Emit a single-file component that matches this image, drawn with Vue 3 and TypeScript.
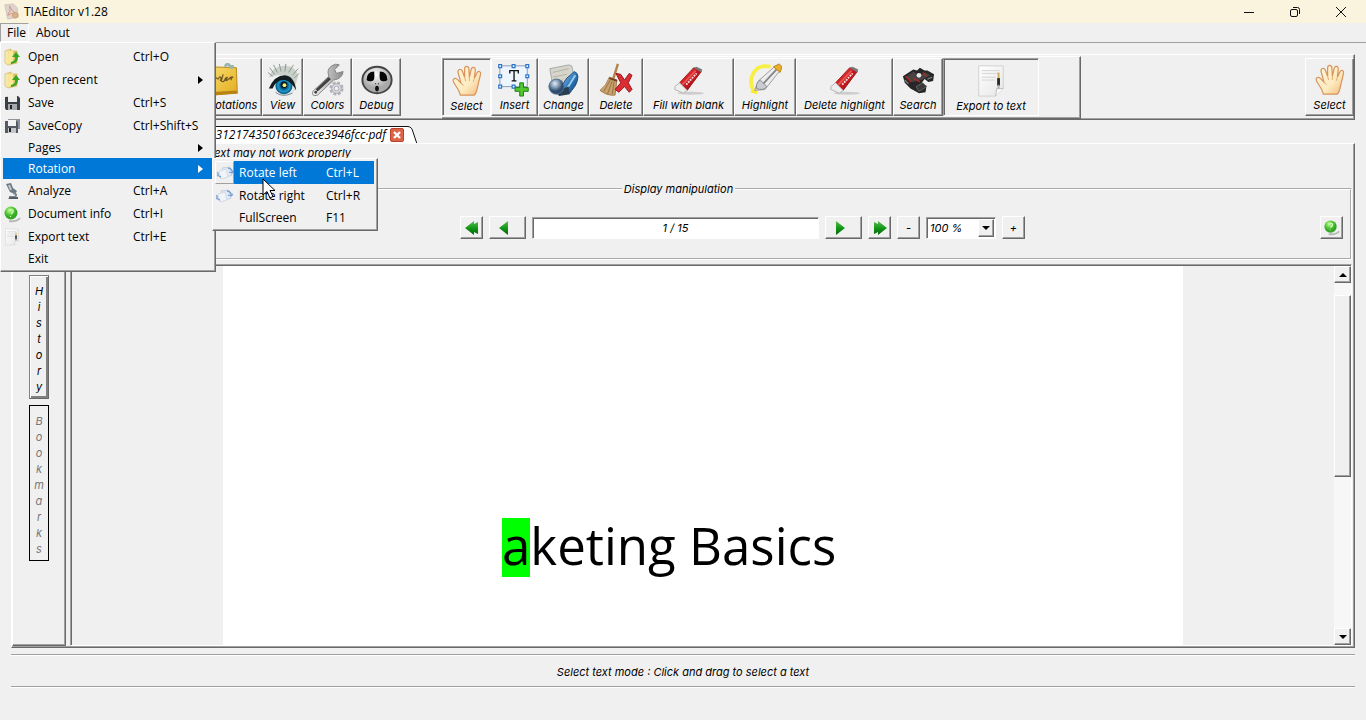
<script setup lang="ts">
import { ref } from 'vue'

interface Tool { label: string; icon: string; pressed?: boolean }
interface Item { label: string; keys?: string; icon?: string; sub?: boolean; active?: boolean }

const viewTools: Tool[] = [
  { label: 'Annotations', icon: 'notes' },
  { label: 'View', icon: 'eye' },
  { label: 'Colors', icon: 'wrench' },
  { label: 'Debug', icon: 'ghost' },
]
const editTools: Tool[] = [
  { label: 'Select', icon: 'hand', pressed: true },
  { label: 'Insert', icon: 'insert' },
  { label: 'Change', icon: 'change' },
  { label: 'Delete', icon: 'broom' },
  { label: 'Fill with blank', icon: 'eraser' },
  { label: 'Highlight', icon: 'marker' },
  { label: 'Delete highlight', icon: 'eraser' },
  { label: 'Search', icon: 'binoculars' },
  { label: 'Export to text', icon: 'page', pressed: true },
]
const fileMenu: Item[] = [
  { label: 'Open', keys: 'Ctrl+O', icon: 'folder' },
  { label: 'Open recent', icon: 'folder', sub: true },
  { label: 'Save', keys: 'Ctrl+S', icon: 'disk' },
  { label: 'SaveCopy', keys: 'Ctrl+Shift+S', icon: 'disks' },
  { label: 'Pages', sub: true },
  { label: 'Rotation', sub: true, active: true },
  { label: 'Analyze', keys: 'Ctrl+A', icon: 'scope' },
  { label: 'Document info', keys: 'Ctrl+I', icon: 'info' },
  { label: 'Export text', keys: 'Ctrl+E', icon: 'page' },
  { label: 'Exit' },
]
const rotationMenu: Item[] = [
  { label: 'Rotate left', keys: 'Ctrl+L', icon: 'rotate', active: true },
  { label: 'Rotate right', keys: 'Ctrl+R', icon: 'rotate' },
  { label: 'FullScreen', keys: 'F11' },
]
const pageText = ref('1 / 15')
const zoom = ref('100 %')
</script>

<template>
  <div class="app">
    <svg class="defs" width="0" height="0" aria-hidden="true">
      <defs>
        <linearGradient id="gSkin" x1="0" y1="0" x2="1" y2="1"><stop offset="0" stop-color="#fff6dc" /><stop offset=".6" stop-color="#fdebc0" /><stop offset="1" stop-color="#efb878" /></linearGradient>
        <linearGradient id="gNote" x1="0" y1="0" x2="1" y2="1"><stop offset="0" stop-color="#f8dd70" /><stop offset="1" stop-color="#e2ac1c" /></linearGradient>
        <radialGradient id="gIris"><stop offset="0" stop-color="#03202e" /><stop offset=".35" stop-color="#0b4a6c" /><stop offset=".7" stop-color="#1b9bd2" /><stop offset="1" stop-color="#06466a" /></radialGradient>
        <linearGradient id="gSteel" x1="0" y1="0" x2="1" y2="0"><stop offset="0" stop-color="#f7f7f7" /><stop offset="1" stop-color="#8b8b8b" /></linearGradient>
        <radialGradient id="gFace" cx=".45" cy=".3"><stop offset="0" stop-color="#ffffff" /><stop offset="1" stop-color="#a9a9a9" /></radialGradient>
        <linearGradient id="gBlue" x1="0" y1="0" x2="1" y2="1"><stop offset="0" stop-color="#9cc6ea" /><stop offset=".5" stop-color="#2b78bd" /><stop offset="1" stop-color="#123c70" /></linearGradient>
        <radialGradient id="gBall" cx=".4" cy=".3"><stop offset="0" stop-color="#e4edf5" /><stop offset=".6" stop-color="#7892ac" /><stop offset="1" stop-color="#2e4c6c" /></radialGradient>
        <linearGradient id="gRed" x1="0" y1="0" x2="1" y2="1"><stop offset="0" stop-color="#f0645c" /><stop offset=".45" stop-color="#cf1820" /><stop offset="1" stop-color="#8f0d12" /></linearGradient>
        <radialGradient id="gGreen" cx=".4" cy=".3"><stop offset="0" stop-color="#d4ffb0" /><stop offset=".5" stop-color="#69d545" /><stop offset="1" stop-color="#36a826" /></radialGradient>
        <linearGradient id="gArrow" x1="0" y1="0" x2="0" y2="1"><stop offset="0" stop-color="#60b850" /><stop offset=".5" stop-color="#119a18" /><stop offset="1" stop-color="#045f0a" /></linearGradient>
        <linearGradient id="gFolder" x1="0" y1="0" x2="1" y2="0"><stop offset="0" stop-color="#fdf3b4" /><stop offset="1" stop-color="#d8b85a" /></linearGradient>
        <linearGradient id="gPaper" x1="0" y1="0" x2="1" y2="1"><stop offset="0" stop-color="#ffffff" /><stop offset="1" stop-color="#e6e6e6" /></linearGradient>
      </defs>
      <symbol id="hand" viewBox="0 0 36 36">
        <path d="M11 33C10 27 6 24 3.500 18.500 2.500 16 5 14 7.500 16L11.500 20 8.500 9C8 5.500 11.500 4.500 13 7.500L15.500 14 15.500 5C15.500 1.800 19.500 1.800 20 5L20.500 14 22.500 5.500C23.500 2.500 27 3.200 26.800 6.500L25.800 15 28.500 9.500C30 6.500 33 8 32.300 11L29 25Q28 31 25.500 33Z" fill="url(#gSkin)" stroke="#d9935c" stroke-width="1.300" />
        <path d="M15.500 14l1 4M20.500 14v4M25.800 15l-1.300 4M11.500 20l3 3" fill="none" stroke="#e2a86f" />
      </symbol>
      <symbol id="notes" viewBox="0 0 36 36">
        <path d="M0 4L29 5 30 32 0 34Z" fill="url(#gNote)" stroke="#b98613" />
        <path d="M0 31l29-2 1 3-30 3z" fill="#b88310" />
        <path d="M5 20q1-6 3-4t3-1q3-1 1 4m3-7l-2 7q3 2 4-2 3-3 2-1-3 5 2 1 3-3 4-2-3 2-1 3" fill="none" stroke="#6b5520" stroke-width="1.300" />
        <path d="M17 4q2-5 5-1t3-1" fill="none" stroke="#9ab4ae" stroke-width="3" />
      </symbol>
      <symbol id="eye" viewBox="0 0 36 36">
        <path d="M3 15Q8 2 21 3 32 4 34 14L31 24Q22 9 8 14Z" fill="#bdc7bd" opacity=".75" />
        <path d="M7 14L2 10M9 12L4 5M12 10L8 2M16 9L14 1M20 9L21 1M24 10L29 2M28 13L34 6M30 16L35 11" stroke="#87938e" />
        <path d="M5 28Q8 16 19 14 29 14 32 28 26 35 18 34 10 33 8 25Z" fill="#dce5e8" />
        <circle cx="19" cy="24" r="9" fill="url(#gIris)" />
        <circle cx="19" cy="23" r="3.500" fill="#031b27" /><circle cx="19.500" cy="23.500" r="2" fill="#fff46e" />
        <path d="M3 27Q9 13 20 13 30 14 32 29 27 20 20 18 11 17 7 27" fill="#121d22" />
        <path d="M10 31Q17 37 28 32" fill="none" stroke="#77898b" />
      </symbol>
      <symbol id="wrench" viewBox="0 0 36 36">
        <path d="M2 30L19 14Q16 7 22 3 26 0 30 2L25 7 27 11 34 9Q33 17 24 18L7 34Q0 36 2 30Z" fill="url(#gSteel)" stroke="#818181" />
        <path d="M6 29L20 16" stroke="#424242" stroke-width="3" /><circle cx="5" cy="31" r="1.500" fill="#444" />
        <circle cx="27" cy="27" r="6" fill="#e9e9ee" stroke="#b2b2ba" stroke-width="3" stroke-dasharray="3 1.700" />
        <circle cx="27" cy="27" r="5" fill="#dedee4" stroke="#a6a6b0" /><circle cx="27" cy="27" r="2.500" fill="#f0f0f0" stroke="#a6a6b0" />
      </symbol>
      <symbol id="ghost" viewBox="0 0 36 36">
        <ellipse cx="18" cy="18" rx="15.500" ry="14" fill="url(#gFace)" stroke="#444" stroke-width="2" />
        <path d="M15 9Q7 9 7 18 9 20 13 19 16 19 15 9ZM21 9Q29 9 29 18 27 20 23 19 20 19 21 9Z" fill="#050505" />
        <ellipse cx="18" cy="27" rx="2" ry="3" fill="#111" /><path d="M16 22h1m2 0h1" stroke="#111" />
      </symbol>
      <symbol id="insert" viewBox="0 0 36 36">
        <path d="M2 3H31V25H2Z" fill="#edf5ff" stroke="#8597b2" />
        <path d="M.8 1.800h3v3h-3zM15 1.800h3v3h-3zM29.500 1.800h3v3h-3zM.8 12.500h3v3h-3zM29.500 12.500h3v3h-3zM.8 23.500h3v3h-3zM15 23.500h3v3h-3z" fill="#fff" stroke="#2b75c9" stroke-width="1.300" />
        <path d="M12.500 11V8H21.500V11M17 8V19M14.500 19H19.500" fill="none" stroke="#111" stroke-width="1.400" />
        <path d="M23 21h4v5h5v4h-5v5h-4v-5h-5v-4h5z" fill="#55c62e" stroke="#177d12" />
      </symbol>
      <symbol id="change" viewBox="0 0 36 36">
        <path d="M3 6L23 2Q27 2 27 6L29 24 7 29Z" fill="#d7d5c9" stroke="#a4a6a7" />
        <path d="M6 10l17-4M6 15l15-3M7 20l10-2" stroke="#aeb0aa" />
        <path d="M20 32Q13 25 21 16L29 9Q36 12 30 24L24 32Z" fill="url(#gBlue)" stroke="#234a76" />
        <path d="M20 29L30 13" stroke="#9fceed" stroke-width="2" />
        <path d="M8 30L23 25 24 33 13 35Z" fill="#283e54" /><circle cx="10" cy="25" r="8" fill="url(#gBall)" stroke="#55718f" />
      </symbol>
      <symbol id="broom" viewBox="0 0 36 36">
        <path d="M20 1L15 17" stroke="#b2824b" stroke-width="2.500" />
        <path d="M11 15L19 18 17 34Q9 35 1 29 8 24 11 15Z" fill="#c9a16d" stroke="#a07a4a" />
        <path d="M12 18L5 30M14 19L9 33M16 20L14 33" stroke="#94703f" /><path d="M11 16l8 3" stroke="#733f25" stroke-width="2" />
        <path d="M18 11L23 12 27 18 32 11 35 13 31 21 35 28 32 31 27 25 21 31 17 28 23 21Z" fill="#d92d32" stroke="#981219" />
      </symbol>
      <symbol id="eraser" viewBox="0 0 36 36">
        <ellipse cx="20" cy="32" rx="14" ry="1.500" fill="#ccc" />
        <path d="M8 21L23 5 31 9 16 29Z" fill="url(#gRed)" stroke="#9d171b" /><path d="M23 5L26 4 32 7 31 10Z" fill="#777" />
        <path d="M11 23L25 8" stroke="#e65852" stroke-width="2" /><path d="M15 23L26 11" stroke="#f5dada" stroke-width="2" stroke-dasharray="2 1" />
        <path d="M8 21L16 29 12 32 3 28 3 25Z" fill="#eee" stroke="#b0b0b0" />
      </symbol>
      <symbol id="marker" viewBox="0 0 36 36">
        <path d="M24 4Q12 1 6 10 0 21 7 31" fill="none" stroke="#f8ef45" stroke-width="4" /><path d="M2 31L9 26 10 33Z" fill="#fbec28" />
        <path d="M7 29L11 19 28 4 33 9 18 28Z" fill="#ededed" stroke="#999" /><path d="M16 22L30 7" stroke="#868686" stroke-width="2" />
        <path d="M9 27Q8 21 13 18L20 25Q16 30 9 27Z" fill="#c9cbd1" stroke="#84868c" />
        <path d="M27 4L33 1 36 4 34 10Z" fill="#eeae22" stroke="#b7811d" />
      </symbol>
      <symbol id="binoculars" viewBox="0 0 36 36">
        <path d="M2 14L13 7 17 8 20 5 25 8 28 8 35 12 34 19 29 20 25 17 22 21 27 24 26 31 19 32 10 27 4 21Z" fill="#272527" />
        <path d="M5 15L13 9 19 13 26 10 31 13 22 18 12 20Z" fill="#484244" /><path d="M16 25L23 21 27 25 19 30Z" fill="#3a3939" stroke="#666" />
        <path d="M5 14l6 6M23 10l4 4M13 16l7 4" stroke="#ad2a22" stroke-width="1.500" /><circle cx="19" cy="13" r="2.500" fill="#e9e9e9" />
        <path d="M28 17l5-2M4 18l4 4" stroke="#777" stroke-width="1.500" />
      </symbol>
      <symbol id="page" viewBox="0 0 36 36">
        <path d="M5 2H31V26L23 34H5Z" fill="url(#gPaper)" stroke="#d0d0d0" /><path d="M31 26H24L23 34" fill="#f8f8f8" stroke="#bbb" />
        <path d="M8 7h19M8 10h18M8 14h15M8 17h14" stroke="#d2d2d2" />
        <path d="M26 9v10" stroke="#cdac5a" stroke-width="2" /><path d="M26 15v8" stroke="#27272b" stroke-width="3" /><path d="M26 22v4" stroke="#aaa" stroke-width="2" />
      </symbol>
      <symbol id="folder" viewBox="0 0 18 18">
        <path d="M2 3L8 1 8 3 14 3 14 15 5 17 2 15Z" fill="url(#gFolder)" stroke="#d1b660" stroke-width=".7" />
        <path d="M6 4L10 2V14L5 16Z" fill="#f9e896" /><path d="M8 14Q13 13 12 9L9 9 13 4 17 9 15 9Q15 15 8 16Z" fill="#39a622" />
      </symbol>
      <symbol id="disk" viewBox="0 0 18 18">
        <path d="M2 3L15 2 17 4V16L3 16 2 14Z" fill="#3a3e45" /><path d="M5 2h9v6H5z" fill="#eee" /><path d="M5 10h9v6H5z" fill="#a5a8ac" /><path d="M7 11h2v4H7z" fill="#222" />
      </symbol>
      <symbol id="disks" viewBox="0 0 18 18">
        <path d="M5 2H17V12H5Z" fill="#8d939d" /><path d="M2 4H14L15 6V16H2Z" fill="#555a64" /><path d="M5 3h8v6H5z" fill="#f3f3f3" /><path d="M5 11h8v5H5z" fill="#c3c7cc" /><path d="M6 11h2v4H6z" fill="#222" />
      </symbol>
      <symbol id="scope" viewBox="0 0 18 18">
        <path d="M3 2L8 1 10 6 14 9 12 12 7 10 5 6Z" fill="#6b7983" /><path d="M6 3L8 8" stroke="#c3cbd0" stroke-width="2" /><path d="M10 11Q15 12 12 15H6" fill="none" stroke="#7c8790" stroke-width="2" /><path d="M5 17H15V15H7Z" fill="#525e68" />
      </symbol>
      <symbol id="info" viewBox="0 0 18 18">
        <path d="M6 16Q14 17 17 13" fill="none" stroke="#b8b8b8" stroke-width="2" /><circle cx="8" cy="8" r="6.500" fill="url(#gGreen)" />
        <path d="M7 5Q11 4 10 7L8 9M7.500 11v1" fill="none" stroke="#d9ffc6" stroke-width="1.200" />
      </symbol>
      <symbol id="rotate" viewBox="0 0 18 18">
        <g opacity=".8"><path d="M6 4L14 3 16 11 8 14Z" fill="#dfe9f6" stroke="#b9c9de" /><path d="M3 7L10 5 12 13 5 15Z" fill="#f0f5fc" stroke="#ccd8e8" />
        <path d="M2 8Q1 12 5 13M3 11l-2 1M12 4Q17 5 16 9M16 9l2-2M16 9l-3-1" fill="none" stroke="#5a8dcc" stroke-width="1.300" /></g>
      </symbol>
      <symbol id="back" viewBox="0 0 14 14"><path d="M2 7L11 0V14Z" fill="url(#gArrow)" /></symbol>
      <symbol id="first" viewBox="0 0 14 14"><path d="M0 7L9 0V3L13 1V13L9 11V14Z" fill="url(#gArrow)" /></symbol>
    </svg>

    <header class="titlebar">
      <svg class="logo" viewBox="0 0 18 18"><path d="M2 2L11 1 15 5 16 15 5 17Z" fill="#ded4cf" stroke="#d0c5bc" /><path d="M5 13Q9 8 7 3 9 9 14 11 9 10 5 13" fill="none" stroke="#dc9188" /><circle cx="13" cy="13" r="3" fill="#dcb188" stroke="#c79c76" /></svg>
      <h1>TIAEditor v1.28</h1>
      <div class="winbtns">
        <button aria-label="Minimize"><svg viewBox="0 0 12 12"><path d="M1 6.500H11" /></svg></button>
        <button aria-label="Restore"><svg viewBox="0 0 12 12"><rect x="1.500" y="3.500" width="7" height="7" rx="1.500" /><path d="M4 1.500H8.500Q10.500 1.500 10.500 3.500V8" /></svg></button>
        <button aria-label="Close"><svg viewBox="0 0 12 12"><path d="M1 1L11 11M11 1L1 11" /></svg></button>
      </div>
    </header>

    <nav class="menubar">
      <button class="open">File</button><button>About</button>
      <ul class="menu file raised" role="menu">
        <li v-for="m in fileMenu" :key="m.label">
          <button role="menuitem" :class="{ active: m.active, plain: !m.icon }">
            <span class="mi"><svg v-if="m.icon"><use :href="'#' + m.icon" /></svg></span>
            <span>{{ m.label }}</span><span>{{ m.keys }}</span>
            <svg v-if="m.sub" class="chev" viewBox="0 0 5 8"><path d="M0 0L5 4 0 8Z" fill="currentColor" /></svg>
          </button>
        </li>
      </ul>
      <ul class="menu sub raised" role="menu">
        <li v-for="m in rotationMenu" :key="m.label">
          <button role="menuitem" :class="{ active: m.active, plain: !m.icon }">
            <span class="mi"><svg v-if="m.icon"><use :href="'#' + m.icon" /></svg></span>
            <span>{{ m.label }}</span><span>{{ m.keys }}</span>
          </button>
        </li>
      </ul>
      <svg class="cursor" viewBox="0 0 14 21"><path d="M1 1V17L5 13.500 8 20 11 18.500 8 12.500H13Z" fill="#fff" stroke="#000" /></svg>
    </nav>

    <main class="work">
      <section class="toolbar raised">
        <div class="tools viewset">
          <button v-for="t in viewTools" :key="t.label" class="tool raised"><svg><use :href="'#' + t.icon" /></svg>{{ t.label }}</button>
        </div>
        <div class="tools editset raised">
          <button v-for="t in editTools" :key="t.label" class="tool" :class="t.pressed ? 'sunken' : 'raised'"><svg><use :href="'#' + t.icon" /></svg>{{ t.label }}</button>
        </div>
        <button class="tool current raised"><svg><use href="#hand" /></svg>Select</button>
      </section>

      <div class="tabs">
        <div class="tab"><span>03121743501663cece3946fcc·pdf</span>
          <button aria-label="Close tab"><svg viewBox="0 0 14 14"><rect x=".5" y=".5" width="13" height="13" rx="1.500" fill="#dc6548" stroke="#b9442b" /><path d="M4 4L10 10M10 4L4 10" stroke="#fff" stroke-width="2.300" /></svg></button>
        </div>
        <svg class="edge" viewBox="0 0 10 18"><path d="M0 0Q4 1 5 6L9 18H0Z" fill="#fff" /><path d="M0 .5Q4 1 5 6L9 18" fill="none" stroke="#111" /></svg>
      </div>

      <section class="document raised">
        <p class="warning">The text may not work properly</p>
        <fieldset>
          <legend>Display manipulation</legend>
          <div class="controls">
            <span class="before"></span>
            <button class="ctl raised" aria-label="First page"><svg><use href="#first" /></svg></button>
            <button class="ctl wide raised" aria-label="Previous page"><svg><use href="#back" /></svg></button>
            <input v-model="pageText" class="sunken" aria-label="Page">
            <button class="ctl wide raised" aria-label="Next page"><svg class="flip"><use href="#back" /></svg></button>
            <button class="ctl raised" aria-label="Last page"><svg class="flip"><use href="#first" /></svg></button>
            <button class="ctl raised">-</button>
            <div class="combo sunken"><select v-model="zoom" aria-label="Zoom"><option>100 %</option><option>150 %</option></select><span class="drop raised"><svg viewBox="0 0 8 4"><path d="M0 0H8L4 4Z" /></svg></span></div>
            <button class="ctl raised">+</button>
            <span class="after"><button class="ctl raised" aria-label="Document info"><svg class="big"><use href="#info" /></svg></button></span>
          </div>
        </fieldset>
        <div class="split">
          <aside class="raised">
            <button class="side history" aria-label="History"><span v-for="(c, i) in 'History'" :key="i">{{ c }}</span></button>
            <button class="side marks" disabled aria-label="Bookmarks"><span v-for="(c, i) in 'Bookmarks'" :key="i">{{ c }}</span></button>
          </aside>
          <div class="viewer sunken">
            <div class="canvas"><article class="sheet"><p><mark>a</mark>keting Basics</p></article></div>
            <div class="scroll">
              <button class="raised" aria-label="Scroll up"><svg viewBox="0 0 8 4"><path d="M0 4H8L4 0Z" /></svg></button>
              <div class="thumb raised"></div>
              <button class="raised" aria-label="Scroll down"><svg viewBox="0 0 8 4"><path d="M0 0H8L4 4Z" /></svg></button>
            </div>
          </div>
        </div>
      </section>
      <footer>Select text mode : Click and drag to select a text</footer>
    </main>
  </div>
</template>

<style>
body { margin: 0; background: #f0f0f0; }
</style>

<style scoped>
* { box-sizing: border-box; }
.app { min-height: 100vh; display: flex; flex-direction: column; position: relative; background: #f0f0f0; color: #000; font: italic 11px/16px Inter, sans-serif; }
.defs { position: absolute; }
button { font: inherit; color: inherit; background: none; border: 0; padding: 0; margin: 0; white-space: nowrap; }
svg { display: block; }
.raised { background: #f0f0f0; border: 1px solid; border-color: #fff #696969 #696969 #fff; box-shadow: inset -1px -1px #a0a0a0; }
.sunken { border: 1px solid; border-color: #a0a0a0 #fff #fff #a0a0a0; box-shadow: inset 1px 1px #696969; }

.titlebar { display: flex; align-items: center; height: 23px; background: #faf3dd; padding-left: 3px; font-style: normal; }
.logo { width: 17px; height: 17px; margin-right: 4px; }
h1 { font: 12px/20px "Open Sans", sans-serif; margin: 0; flex: 1; }
.winbtns { display: flex; padding-right: 2px; }
.winbtns button { width: 46px; height: 22px; display: grid; place-items: center; }
.winbtns svg { width: 12px; height: 12px; fill: none; stroke: #111; }

.menubar { height: 20px; display: flex; border-bottom: 1px solid #a0a0a0; font: 12px/18px "Open Sans", sans-serif; }
.menubar > button { padding: 0 7px; }
.menubar > .open { width: 29px; padding: 0 0 0 6px; text-align: left; border: 1px solid; border-color: #a0a0a0 #fff #fff #a0a0a0; }
.menu { position: absolute; list-style: none; margin: 0; z-index: 2; }
.file { left: 0; top: 42px; width: 216px; padding: 2px 3px 2px 2px; }
.sub { left: 212px; top: 158px; width: 166px; padding: 2px 3px 2px 2px; z-index: 3; }
.menu button { display: grid; grid-template-columns: 25px 105px 1fr auto; align-items: center; width: 100%; height: 23px; text-align: left; padding-right: 9px; }
.menu button.plain { height: 21px; }
.sub button { grid-template-columns: 24px 87px 1fr; padding: 0; }
.menu svg { width: 18px; height: 18px; }
.menu svg.chev { width: 5px; height: 8px; }
.menu .active { background: #0078d7; color: #fff; }
.sub .active .mi { background: #f0f0f0; width: 19px; height: 23px; padding-top: 2px; border: 1px solid; border-color: #fff #a0a0a0 #a0a0a0 #fff; }
.menu svg.cursor, .cursor { position: absolute; left: 262px; top: 178px; width: 14px; height: 21px; z-index: 4; }

.work { flex: 1; display: flex; flex-direction: column; padding: 11px 11px 33px; }
.toolbar { display: flex; height: 66px; padding: 1px 0; }
.tools { display: grid; }
.viewset { grid-template-columns: 72px 41px 49px 49px; height: 60px; margin-left: 178px; padding: 2px 0 0; }
.editset { grid-template-columns: 49px 47px 51px 54px 91px 62px 97px 50px 96px; height: 63px; margin-left: 40px; padding: 1px 41px 3px 0; }
.tool { display: flex; flex-direction: column; align-items: center; height: 58px; padding-top: 4px; }
.tool svg { width: 34px; height: 34px; }
.tool.sunken { padding-top: 5px; }
.current { width: 49px; margin: 2px 0 0 auto; }

.tabs { display: flex; height: 17px; margin-top: 6px; }
.tab { width: 397px; display: flex; justify-content: flex-end; align-items: center; gap: 4px; background: #fff; border-top: 1px solid #111; padding-right: 4px; font: italic 12px/16px "Open Sans", sans-serif; }
.tab svg { width: 14px; height: 14px; }
.edge { width: 10px; height: 18px; }

.document { flex: 1; display: flex; flex-direction: column; padding: 0 2px 1px 0; }
.warning { width: 339px; margin: 1px 0 0; text-align: right; }
fieldset { margin: 20px 0 4px; padding: 19px 7px 19px 0; border: 2px groove #fff; min-width: 0; }
legend { margin: 0 auto; padding: 0 2px; }
.controls { display: flex; align-items: center; gap: 6px; }
.before { flex: 440; }
.after { flex: 312; display: flex; justify-content: flex-end; }
.ctl { width: 23px; height: 23px; display: grid; place-items: center; }
.ctl svg { width: 14px; height: 14px; }
.ctl svg.big { width: 17px; height: 17px; }
.wide { width: 37px; padding-right: 8px; }
.flip { transform: scaleX(-1); }
input { width: 287px; height: 22px; padding: 0; text-align: center; font: inherit; background: #fff; }
.combo { display: flex; width: 70px; height: 22px; padding: 1px; background: #fff; }
select { appearance: none; border: 0; background: none; padding: 0 2px; flex: 1; min-width: 0; font: inherit; }
.drop { width: 16px; display: grid; place-items: center; pointer-events: none; }
.drop svg, .scroll svg { width: 8px; height: 4px; }

.split { flex: 1; display: flex; gap: 4px; }
aside { width: 54px; padding: 10px 0 0 16px; display: flex; flex-direction: column; gap: 6px; }
.side { width: 20px; padding: 7px 0 3px; display: flex; flex-direction: column; align-items: center; border: 1px solid #000; }
.history { border-color: #808080 #696969 #696969 #808080; box-shadow: inset 1px 1px #fff, inset -2px -2px #808080; }
.marks { color: #777; }
.viewer { flex: 1; display: flex; padding: 1px 0 0 1px; }
.canvas { flex: 1; display: flex; justify-content: center; }
.sheet { width: 960px; background: #fff; padding: 252px 0 0 279px; }
.sheet p { margin: 0; font: 51px/55px "Open Sans", sans-serif; white-space: nowrap; }
mark { background: #0f0; color: inherit; display: inline-block; height: 59px; }
.scroll { width: 17px; display: flex; flex-direction: column; background: #f7f7f7; }
.scroll button { height: 17px; display: grid; place-items: center; }
.thumb { height: 182px; margin: 12px 0 auto; }
footer { margin-top: 6px; height: 33px; text-align: center; line-height: 34px; border-top: 1px solid #a0a0a0; border-bottom: 1px solid #a0a0a0; box-shadow: inset 0 1px #fff, 0 1px #fff; }
</style>
